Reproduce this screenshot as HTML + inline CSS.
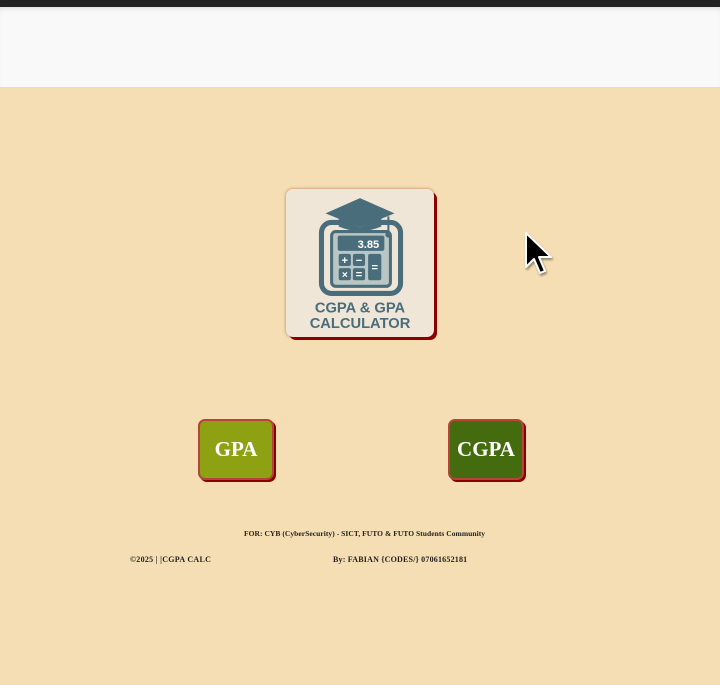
<!DOCTYPE html>
<html><head><style>
body{margin:0;width:720px;height:685px;background:#f5deb3;font-family:"Liberation Serif",serif;position:relative;overflow:hidden}
.top{position:absolute;left:0;top:0;width:720px;height:7px;background:#202020}
.hdr{position:absolute;left:0;top:7px;width:720px;height:80px;background:#f9f9f9;box-shadow:inset 0 4px 6px -3px rgba(0,0,0,.15);border-bottom:1px solid #e4dccc}
.logo{position:absolute;left:286px;top:189px;width:148px;height:148px;background:#efe6d7;border-radius:7px;box-shadow:3px 3px 0 #8b0000,0 0 3px rgba(150,60,40,.6)}
.btn{position:absolute;top:419px;width:72px;height:57px;border:2px solid #b5443a;border-radius:7px;box-shadow:2px 2px 0 #8b0000;color:#fff;font-weight:bold;font-size:21px;display:flex;align-items:center;justify-content:center}
.t{position:absolute;font-size:8px;font-weight:bold;color:#222;white-space:nowrap}
</style></head><body>
<div class="top"></div><div class="hdr"></div>
<div class="logo">
<svg width="148" height="148" viewBox="0 0 146 146">
<rect x="35" y="33" width="78" height="70" rx="10" fill="none" stroke="#4a6d7c" stroke-width="5"/>
<rect x="45" y="42" width="58" height="54" rx="4" fill="#b9c6c4" stroke="#4a6d7c" stroke-width="3"/>
<rect x="51" y="46" width="46" height="15" rx="2" fill="#4a6d7c"/>
<text x="92" y="58" font-family="Liberation Sans" font-weight="bold" font-size="11" fill="#fff" text-anchor="end">3.85</text>
<rect x="52" y="64" width="12" height="12" rx="2" fill="#4a6d7c"/><rect x="66" y="64" width="12" height="12" rx="2" fill="#4a6d7c"/>
<rect x="52" y="78" width="12" height="12" rx="2" fill="#4a6d7c"/><rect x="66" y="78" width="12" height="12" rx="2" fill="#4a6d7c"/>
<rect x="81" y="64" width="13" height="26" rx="2" fill="#4a6d7c"/>
<text x="58" y="74" font-size="11" font-family="Liberation Sans" font-weight="bold" fill="#fff" text-anchor="middle">+</text>
<text x="72" y="74" font-size="11" font-family="Liberation Sans" font-weight="bold" fill="#fff" text-anchor="middle">−</text>
<text x="58" y="88" font-size="10" font-family="Liberation Sans" font-weight="bold" fill="#fff" text-anchor="middle">×</text>
<text x="72" y="88" font-size="11" font-family="Liberation Sans" font-weight="bold" fill="#fff" text-anchor="middle">=</text>
<text x="87.5" y="81" font-size="11" font-family="Liberation Sans" font-weight="bold" fill="#fff" text-anchor="middle">=</text>
<polygon points="73,9 107,24 73,38 39,24" fill="#4a6d7c"/>
<path d="M52 29 L52 37 Q73 46 94 37 L94 29 L73 38 Z" fill="#4a6d7c"/>
<line x1="101" y1="27" x2="101" y2="42" stroke="#4a6d7c" stroke-width="2"/>
<circle cx="101" cy="45" r="3" fill="#4a6d7c"/>
<text x="73" y="122" font-family="Liberation Sans" font-weight="bold" font-size="14.5" fill="#4a6d7c" text-anchor="middle">CGPA &amp; GPA</text>
<text x="73" y="137" font-family="Liberation Sans" font-weight="bold" font-size="14.5" fill="#4a6d7c" text-anchor="middle">CALCULATOR</text>
</svg></div>
<div class="btn" style="left:198px;background:#8da113">GPA</div>
<div class="btn" style="left:448px;background:#456b0f">CGPA</div>
<div class="t" style="left:244px;top:529px;font-size:7.5px;letter-spacing:0.05px">FOR: CYB (CyberSecurity) - SICT, FUTO &amp; FUTO Students Community</div>
<div class="t" style="left:130px;top:555px;letter-spacing:0.3px">©2025 | |CGPA CALC</div>
<div class="t" style="left:333px;top:555px;letter-spacing:0.2px">By: FABIAN {CODES/} 07061652181</div>
<svg style="position:absolute;left:523px;top:231px" width="34" height="48" viewBox="0 0 34 48">
<path d="M3 2 L3 36 L11 28 L17 42 L22 40 L16 26 L28 26 Z" fill="#000" stroke="#fff" stroke-width="2" stroke-linejoin="round" style="filter:drop-shadow(1px 2px 1px rgba(0,0,0,.4))"/>
</svg>
</body></html>
